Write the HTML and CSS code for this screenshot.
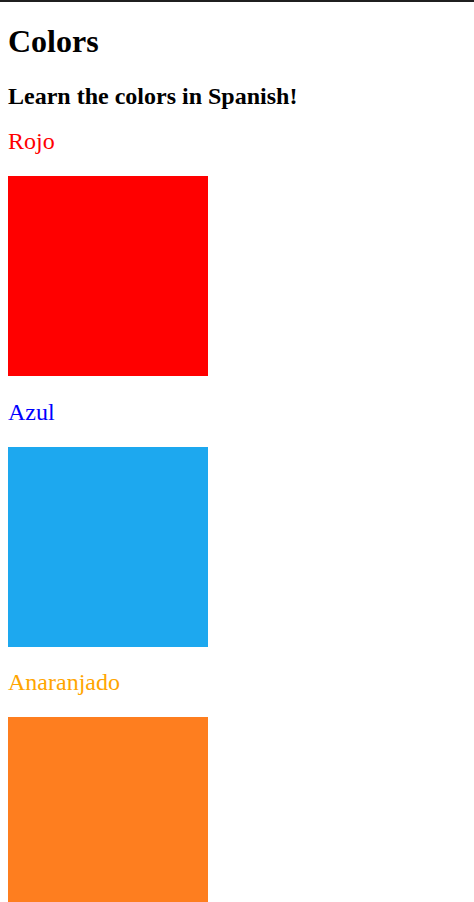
FILE: index.html
```html
<!DOCTYPE html>
<html lang="en">
<head>
<meta charset="utf-8">
<title>Colors</title>
<link rel="stylesheet" href="styles.css">
</head>
<body>
<main class="page">
  <h1 class="title">Colors</h1>
  <h2 class="subtitle">Learn the colors in Spanish!</h2>
  <section class="color">
    <p class="label label-red">Rojo</p>
    <div class="swatch swatch-red"></div>
  </section>
  <section class="color">
    <p class="label label-blue">Azul</p>
    <div class="swatch swatch-blue"></div>
  </section>
  <section class="color">
    <p class="label label-orange">Anaranjado</p>
    <div class="swatch swatch-orange"></div>
  </section>
</main>
</body>
</html>
```

FILE: styles.css
```css
html, body {
  margin: 0;
  padding: 0;
  background: #ffffff;
}

body {
  border-top: 2px solid #1f1f1f;
  font-family: "Liberation Serif", "Times New Roman", serif;
  color: #000000;
}

.page {
  padding: 0 8px;
  display: flex;
  flex-direction: column;
  align-items: flex-start;
}

.title {
  font-family: "Liberation Serif", "Times New Roman", serif;
  font-size: 32px;
  font-weight: bold;
  line-height: 37px;
  margin: 21px 0 0;
}

.subtitle {
  font-family: "Liberation Serif", "Times New Roman", serif;
  font-size: 24px;
  font-weight: bold;
  line-height: 28px;
  margin: 22px 0 0;
}

.color {
  display: flex;
  flex-direction: column;
  align-items: flex-start;
}

.label {
  font-family: "Liberation Serif", "Times New Roman", serif;
  font-size: 24px;
  font-weight: normal;
  line-height: 28px;
  margin: 22px 0 0;
}

.color:first-of-type .label {
  margin-top: 17px;
}

.color:last-of-type .label {
  margin-top: 21px;
}

.label-red { color: #ff0000; }
.label-blue { color: #0000ff; }
.label-orange { color: #ffa500; }

.swatch {
  width: 200px;
  height: 200px;
  margin-top: 21px;
}

.swatch-red { background: #ff0000; }
.swatch-blue { background: #1da8ef; }
.swatch-orange {
  background: #fe7e1f;
}
```
